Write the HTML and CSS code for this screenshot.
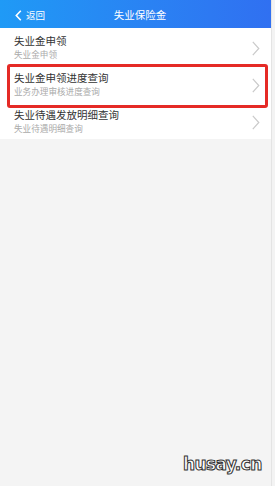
FILE: index.html
```html
<!DOCTYPE html>
<html lang="zh">
<head>
<meta charset="utf-8">
<link rel="stylesheet" href="styles.css">
</head>
<body>
<div class="page">
  <header class="topbar">
    <div class="back">
      <svg class="back-icon" width="7" height="11" viewBox="0 0 7 11"><path d="M5.8 0.8 L1.3 5.5 L5.8 10.2" fill="none" stroke="#fff" stroke-width="1.6"/></svg>
      <span>返回</span>
    </div>
    <div class="title">失业保险金</div>
  </header>
  <ul class="list">
    <li class="item">
      <div class="texts">
        <div class="name">失业金申领</div>
        <div class="desc">失业金申领</div>
      </div>
      <svg class="chev" width="8" height="15" viewBox="0 0 8 15"><path d="M0.8 0.8 L6.8 7.5 L0.8 14.2" fill="none" stroke="#cacaca" stroke-width="1.2"/></svg>
    </li>
    <li class="item marked">
      <div class="texts">
        <div class="name">失业金申领进度查询</div>
        <div class="desc">业务办理审核进度查询</div>
      </div>
      <svg class="chev" width="8" height="15" viewBox="0 0 8 15"><path d="M0.8 0.8 L6.8 7.5 L0.8 14.2" fill="none" stroke="#cacaca" stroke-width="1.2"/></svg>
    </li>
    <li class="item">
      <div class="texts">
        <div class="name">失业待遇发放明细查询</div>
        <div class="desc">失业待遇明细查询</div>
      </div>
      <svg class="chev" width="8" height="15" viewBox="0 0 8 15"><path d="M0.8 0.8 L6.8 7.5 L0.8 14.2" fill="none" stroke="#cacaca" stroke-width="1.2"/></svg>
    </li>
  </ul>
  <div class="watermark">husay.cn</div>
</div>
</body>
</html>
```
FILE: styles.css
```css
html, body {
  margin: 0;
  padding: 0;
  background: #f3f3f3;
}
body {
  font-family: "Noto Sans CJK SC", "Noto Sans", sans-serif;
  width: 275px;
  height: 486px;
  overflow: hidden;
}
.page {
  position: relative;
  height: 486px;
  width: 271px;
  background: #f4f4f4;
  border-right: 1px solid #e4e4e4;
}
.topbar {
  height: 28px;
  padding-top: 2px;
  box-sizing: border-box;
  background: linear-gradient(90deg, #1f9af6 0%, #2a82f3 55%, #3070f1 100%);
  display: flex;
  align-items: center;
  position: relative;
  color: #fff;
}
.back {
  display: flex;
  align-items: center;
  gap: 4px;
  padding-left: 15px;
  font-size: 9.5px;
  line-height: 12px;
}
.title {
  position: absolute;
  left: 9px;
  right: 0;
  text-align: center;
  font-size: 10.5px;
  line-height: 14px;
  pointer-events: none;
}
.list {
  list-style: none;
  margin: 0;
  padding: 0;
  background: #fff;
}
.item {
  height: 37px;
  display: flex;
  align-items: center;
  justify-content: space-between;
  padding: 0 11px 0 14px;
  position: relative;
}
.marked::after {
  content: "";
  position: absolute;
  left: 7px;
  right: 3px;
  top: -1px;
  bottom: -6px;
  border: 3px solid #e52a26;
  border-radius: 3px;
}
.texts {
  display: flex;
  flex-direction: column;
  gap: 0;
}
.name {
  font-size: 10.5px;
  color: #333;
  line-height: 14px;
}
.desc {
  font-size: 8.6px;
  color: #aaa;
  line-height: 12px;
}
.chev {
  margin-top: 4px;
}
.watermark {
  position: absolute;
  left: 183px;
  top: 454px;
  font-family: "DejaVu Sans", sans-serif;
  font-weight: bold;
  font-size: 17px;
  color: #fff;
  -webkit-text-stroke: 1px #333;
  letter-spacing: -0.6px;
}
```
